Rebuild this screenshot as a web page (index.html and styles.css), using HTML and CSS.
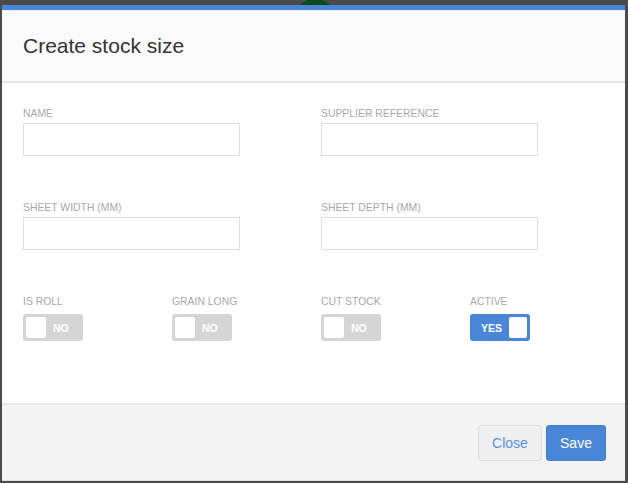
FILE: index.html
```html
<!DOCTYPE html>
<html>
<head>
<meta charset="utf-8">
<link rel="stylesheet" href="styles.css">
</head>
<body>
<div class="blob"></div>
<div class="modal">
  <div class="modal-header"><h1 class="title">Create stock size</h1></div>
  <div class="modal-body">
    <div class="field wide">
      <label class="label">Name</label>
      <input class="input" type="text">
    </div>
    <div class="field wide">
      <label class="label">Supplier reference</label>
      <input class="input" type="text">
    </div>
    <div class="field wide">
      <label class="label">Sheet width (mm)</label>
      <input class="input" type="text">
    </div>
    <div class="field wide">
      <label class="label">Sheet depth (mm)</label>
      <input class="input" type="text">
    </div>
    <div class="field">
      <label class="label tlabel">Is roll</label>
      <div class="toggle"><span class="knob"></span><span class="ttext">NO</span></div>
    </div>
    <div class="field">
      <label class="label tlabel">Grain long</label>
      <div class="toggle"><span class="knob"></span><span class="ttext">NO</span></div>
    </div>
    <div class="field">
      <label class="label tlabel">Cut stock</label>
      <div class="toggle"><span class="knob"></span><span class="ttext">NO</span></div>
    </div>
    <div class="field">
      <label class="label tlabel">Active</label>
      <div class="toggle on"><span class="ttext">YES</span><span class="knob"></span></div>
    </div>
  </div>
  <div class="modal-footer">
    <button class="btn btn-close">Close</button>
    <button class="btn btn-save">Save</button>
  </div>
</div>
</body>
</html>
```
FILE: styles.css
```css
* { box-sizing: border-box; }
html, body { margin: 0; padding: 0; }
body {
  background: #4b4b4b;
  font-family: "Liberation Sans", Arial, sans-serif;
  width: 628px;
  height: 483px;
  overflow: hidden;
  position: relative;
}
.blob {
  position: absolute;
  left: 292px;
  top: -1px;
  width: 46px;
  height: 46px;
  border-radius: 50%;
  background: #0d4a1e;
}
.modal {
  position: relative;
  margin: 5px 0 0 2px;
  width: 623px;
  background: #fff;
  border-top: 5px solid #4a86d8;
  border-bottom: 1px solid #e2e2e2;
}
.modal-header {
  height: 73px;
  background: #fafafa;
  border-top: 1px solid #e8eefa;
  border-bottom: 2px solid #e6e6e6;
  display: flex;
  align-items: center;
  padding-left: 21px;
}
.title {
  margin: 0;
  font-size: 21px;
  font-weight: normal;
  color: #333;
}
.modal-body {
  height: 320px;
  padding: 25px 0 0 21px;
  display: grid;
  grid-template-columns: repeat(4, 149px);
  grid-auto-rows: min-content;
  row-gap: 46px;
  align-content: start;
}
.field { display: flex; flex-direction: column; }
.field.wide { grid-column: span 2; }
.label {
  font-size: 10.4px;
  line-height: 12px;
  text-transform: uppercase;
  color: #a8a8a8;
  margin-bottom: 3px;
}
.tlabel { margin-bottom: 6px; }
.input {
  width: 217px;
  height: 33px;
  border: 1px solid #dedede;
  background: #fff;
  margin: 0;
  padding: 0 8px;
}
.toggle {
  width: 60px;
  height: 27px;
  border-radius: 3px;
  background: #d5d5d5;
  padding: 3px;
  display: flex;
  align-items: center;
  gap: 7px;
}
.knob {
  width: 20px;
  height: 21px;
  background: #fff;
  border-radius: 2px;
}
.ttext {
  color: #fff;
  font-weight: bold;
  font-size: 10.5px;
}
.toggle.on {
  background: #4a86d8;
  padding-left: 11px;
  gap: 7px;
}
.modal-footer {
  height: 77px;
  background: #f4f4f4;
  border-top: 2px solid #e8e8e8;
  display: flex;
  align-items: center;
  justify-content: flex-end;
  gap: 4px;
  padding-right: 19px;
}
.btn {
  height: 36px;
  font-family: "Liberation Sans", Arial, sans-serif;
  font-size: 14px;
  border-radius: 3px;
  margin: 0;
  padding: 0;
}
.btn-close {
  width: 64px;
  background: #efefef;
  border: 1px solid #dcdcdc;
  color: #5a8fdc;
}
.btn-save {
  width: 60px;
  background: #4a86d8;
  border: 1px solid #437dcc;
  color: #fff;
}
```
